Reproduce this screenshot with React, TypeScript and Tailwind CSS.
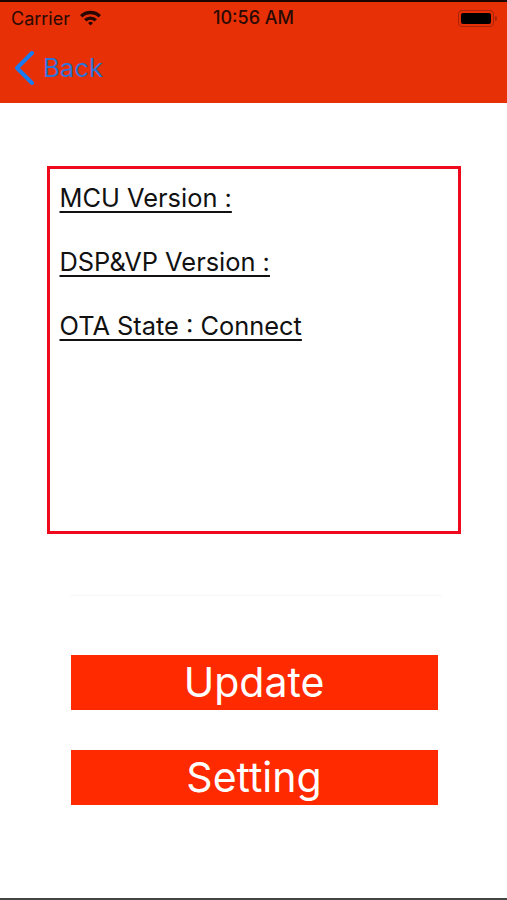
export default function App() {
  return (
    <div className="relative w-[507px] h-[900px] bg-white flex flex-col overflow-hidden font-['Inter','Liberation_Sans',sans-serif]">
      <header className="h-[103px] shrink-0 bg-[#e83006] border-t-2 border-[#1a0500] flex flex-col">
        <div className="h-[33px] shrink-0 px-[11px] flex items-center justify-between relative text-[#2a0a02]">
          <div className="flex items-center gap-[9px]">
            <span className="text-[18px] leading-none">Carrier</span>
            <svg width="23" height="17" viewBox="0 0 23 17" className="mt-[-2px]">
              <path d="M1 6 A15 15 0 0 1 22 6 L19.6 8.5 A11.6 11.6 0 0 0 3.4 8.5 Z" fill="#2a0602" />
              <path d="M5 10 A9.6 9.6 0 0 1 18 10 L15.6 12.4 A6.2 6.2 0 0 0 7.4 12.4 Z" fill="#2a0602" />
              <path d="M9 14 A3.6 3.6 0 0 1 14 14 L11.5 16.6 Z" fill="#2a0602" />
            </svg>
          </div>
          <span className="absolute left-[213px] top-[6px] text-[18px] leading-[20px] font-medium">10:56 AM</span>
          <div className="flex items-center mr-[-1px]">
            <div className="w-[36px] h-[17px] rounded-[4px] border border-[#a82408] p-[2px] flex">
              <div className="flex-1 bg-black rounded-[2px]" />
            </div>
            <div className="w-[2px] h-[5px] ml-[1px] bg-[#a82408] rounded-r-sm" />
          </div>
        </div>
        <div className="flex items-center pl-[14px] gap-[8px] mt-[3px] h-[60px]">
          <svg width="21" height="34" viewBox="0 0 21 34">
            <path d="M18 2 L3 17 L18 32" fill="none" stroke="#1a7af0" strokeWidth="4" strokeLinecap="round" strokeLinejoin="round" />
          </svg>
          <span className="text-[25.7px] leading-none text-[#2f72d8]">Back</span>
        </div>
      </header>

      <main className="flex flex-col flex-1 min-h-0">
        <section className="ml-[47px] mt-[63px] w-[414px] h-[368px] border-[3px] border-[#ee0a1c] pl-[9.5px] pr-[10px] pt-[13px] flex flex-col gap-[32px] text-[25.4px] leading-[32px] text-[#111]">
          <p className="underline underline-offset-[4px]">MCU Version :</p>
          <p className="underline underline-offset-[4px]">DSP&amp;VP Version :</p>
          <p className="underline underline-offset-[4px]">OTA State : Connect</p>
        </section>
        <div className="ml-[70px] mt-[61px] w-[372px] h-px bg-[#f7f7f7]" />
        <button className="ml-[70.5px] mt-[59px] w-[367px] h-[55px] bg-[#ff2a00] text-white text-[41px] leading-[55px] text-center">Update</button>
        <button className="ml-[70.5px] mt-[40px] w-[367px] h-[55px] bg-[#ff2a00] text-white text-[41px] leading-[55px] text-center">Setting</button>
      </main>
      <div className="h-[2px] shrink-0 bg-[#444]" />
    </div>
  );
}
